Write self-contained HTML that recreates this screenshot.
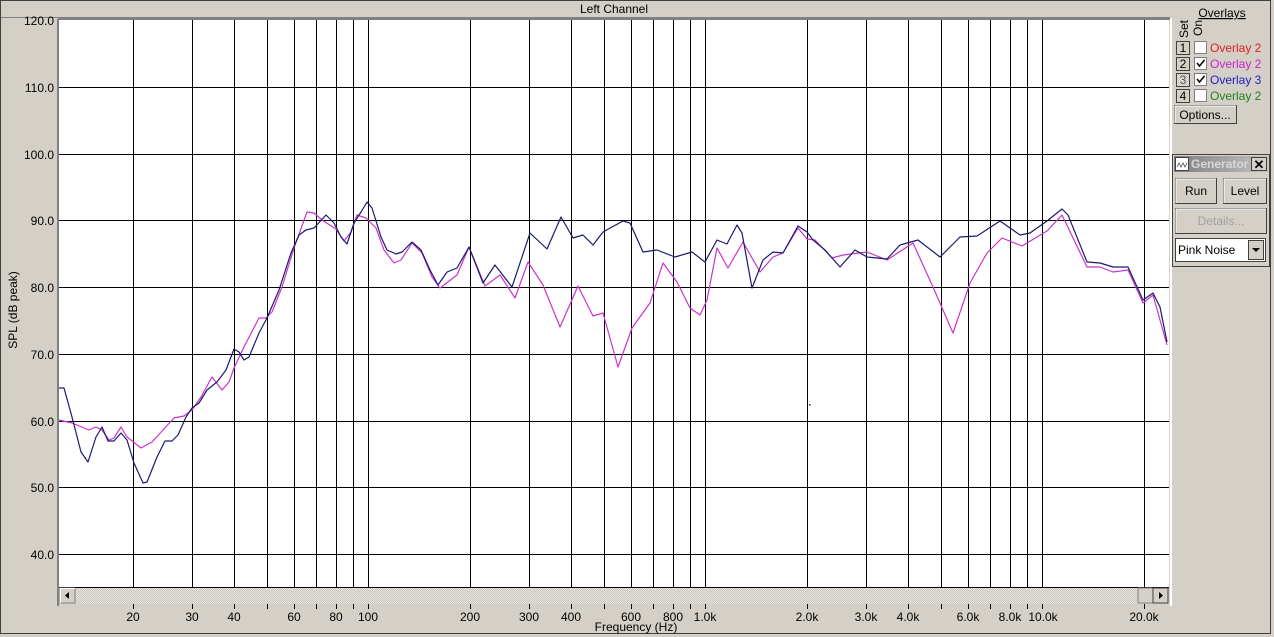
<!DOCTYPE html>
<html><head><meta charset="utf-8"><style>
html,body{margin:0;padding:0;background:#d4d0c8;}
svg{display:block;font-family:"Liberation Sans",Arial,sans-serif;}
</style></head><body>
<svg width="1274" height="637" viewBox="0 0 1274 637" xmlns="http://www.w3.org/2000/svg">
<defs>
<pattern id="hatch" width="2" height="2" patternUnits="userSpaceOnUse"><rect width="2" height="2" fill="#e8e6e2"/><rect width="1" height="1" fill="#c8c4bc"/><rect x="1" y="1" width="1" height="1" fill="#c8c4bc"/></pattern>
<linearGradient id="tg" x1="0" x2="1"><stop offset="0" stop-color="#808080"/><stop offset="1" stop-color="#c0c0c0"/></linearGradient>
</defs>
<rect width="1274" height="637" fill="#d4d0c8"/>
<rect x="0.5" y="0.5" width="1270" height="633" fill="none" stroke="#404040"/>
<line x1="1" y1="17.5" x2="1170" y2="17.5" stroke="#808080"/>
<text x="614" y="13" font-size="12" text-anchor="middle">Left Channel</text>
<rect x="59" y="20" width="1110" height="568" fill="#fff"/>
<line x1="58" y1="19" x2="58" y2="606" stroke="#808080" stroke-width="2"/>
<line x1="58" y1="19" x2="1170" y2="19" stroke="#808080" stroke-width="2"/>
<line x1="1171" y1="18" x2="1171" y2="606" stroke="#fff" stroke-width="2"/>
<path fill="none" stroke="#000" stroke-width="1" d="M59 87.5H1169M59 154.5H1169M59 220.5H1169M59 287.5H1169M59 354.5H1169M59 421.5H1169M59 487.5H1169M59 554.5H1169
M133.5 20V588M192.5 20V588M234.5 20V588M267.5 20V588M294.5 20V588M316.5 20V588M336.5 20V588M353.5 20V588M368.5 20V588
M470.5 20V588M529.5 20V588M571.5 20V588M604.5 20V588M631.5 20V588M653.5 20V588M673.5 20V588M690.5 20V588M705.5 20V588
M807.5 20V588M866.5 20V588M908.5 20V588M941.5 20V588M968.5 20V588M990.5 20V588M1010.5 20V588M1027.5 20V588M1042.5 20V588M1144.5 20V588
M59 587.5H1169"/>
<path stroke="#000" d="M133.5 604V609M192.5 604V609M234.5 604V609M267.5 604V609M294.5 604V609M316.5 604V609M336.5 604V609M353.5 604V609M368.5 604V609M470.5 604V609M529.5 604V609M571.5 604V609M604.5 604V609M631.5 604V609M653.5 604V609M673.5 604V609M690.5 604V609M705.5 604V609M807.5 604V609M866.5 604V609M908.5 604V609M941.5 604V609M968.5 604V609M990.5 604V609M1010.5 604V609M1027.5 604V609M1042.5 604V609M1144.5 604V609"/>
<rect x="59" y="588" width="1110" height="16" fill="url(#hatch)"/>
<rect x="60" y="588" width="15" height="15" fill="#d4d0c8" stroke="#808080"/>
<line x1="60" y1="588.5" x2="75" y2="588.5" stroke="#fff"/><line x1="60.5" y1="588" x2="60.5" y2="603" stroke="#fff"/>
<path d="M65 595.5L69 592V599Z" fill="#000"/>
<rect x="1138" y="588" width="15" height="15" fill="#d4d0c8" stroke="#808080"/>
<rect x="1153" y="588" width="15" height="15" fill="#d4d0c8" stroke="#404040"/>
<path d="M1159 592V599L1163 595.5Z" fill="#000"/>
<polyline fill="none" stroke="#cc33cc" stroke-width="1.2" stroke-linejoin="round" points="59,420 72,423 89,430 96,427 102,430 109,440 114,438 121,427 127,437 141,448 152,442 174,418 184,416 192,410 201,397 212,377 222,390 229,382 234,368 244,347 259,318 266,318 272,312 282,287 294,248 307,212 314,213 322,220 336,229 344,241 351,232 357,215 366,218 376,228 384,250 394,263 401,260 412,243 422,253 432,277 440,288 457,275 469,247 485,286 500,275 515,298 528,262 543,285 560,327 578,286 593,316 603,313 618,367 632,328 650,303 663,263 677,282 690,308 700,315 707,300 717,248 728,268 743,242 760,272 773,257 783,253 798,228 807,239 815,240 832,258 843,255 867,252 887,260 913,243 933,287 953,333 970,283 987,253 1002,238 1022,246 1047,231 1062,215 1087,267 1100,267 1113,272 1128,270 1143,303 1153,295 1167,345"/>
<polyline fill="none" stroke="#1a1a70" stroke-width="1.2" stroke-linejoin="round" points="59,388 64,388 72,417 81,452 88,462 96,437 102,427 108,441 114,441 121,433 127,440 134,463 143,483 147,482 157,457 165,441 172,441 178,435 186,417 192,408 199,403 207,390 217,382 226,370 234,349 239,352 244,360 249,357 259,333 267,318 279,290 291,253 299,235 306,230 314,228 326,215 334,223 341,237 347,244 354,223 361,212 367,202 372,208 381,237 387,250 396,254 402,252 412,242 421,250 430,270 438,285 447,272 457,268 469,247 483,283 495,265 512,287 530,233 547,249 561,217 573,238 583,235 593,245 603,232 623,221 630,223 643,252 657,250 675,257 692,252 705,262 717,240 727,244 737,225 742,233 752,288 763,260 773,252 783,253 798,226 807,232 813,240 825,250 840,267 855,250 867,257 887,259 900,245 918,240 940,257 960,237 977,236 1000,221 1020,235 1030,233 1047,221 1062,209 1068,215 1087,262 1100,263 1113,267 1128,267 1143,300 1153,293 1160,307 1167,342"/>
<rect x="809" y="404" width="1.5" height="1.5" fill="#1a1a70"/>
<g font-size="12" text-anchor="end">
<text x="54" y="25">120.0</text><text x="54" y="92">110.0</text><text x="54" y="159">100.0</text><text x="54" y="225">90.0</text><text x="54" y="292">80.0</text><text x="54" y="359">70.0</text><text x="54" y="426">60.0</text><text x="54" y="492">50.0</text><text x="54" y="559">40.0</text>
</g>
<text transform="translate(17,310) rotate(-90)" font-size="12" text-anchor="middle">SPL (dB peak)</text>
<g font-size="12" text-anchor="middle">
<text x="133" y="621">20</text><text x="192" y="621">30</text><text x="234" y="621">40</text><text x="294" y="621">60</text><text x="336" y="621">80</text><text x="368" y="621">100</text>
<text x="470" y="621">200</text><text x="529" y="621">300</text><text x="571" y="621">400</text><text x="631" y="621">600</text><text x="673" y="621">800</text><text x="705" y="621">1.0k</text>
<text x="807" y="621">2.0k</text><text x="866" y="621">3.0k</text><text x="908" y="621">4.0k</text><text x="968" y="621">6.0k</text><text x="1010" y="621">8.0k</text><text x="1043" y="621">10.0k</text><text x="1144" y="621">20.0k</text>
</g>
<text x="636" y="631" font-size="12" text-anchor="middle">Frequency (Hz)</text>
<text x="1222" y="17" font-size="12" text-anchor="middle" text-decoration="underline">Overlays</text>
<text transform="translate(1188,20) rotate(-90)" font-size="12" text-anchor="end">Set</text>
<text transform="translate(1202,20) rotate(-90)" font-size="12" text-anchor="end">On</text>
<g font-size="12">
<rect x="1176.5" y="41.5" width="13" height="13" fill="#d4d0c8" stroke="#404040"/><text x="1183" y="52" text-anchor="middle">1</text>
<rect x="1194.5" y="41.5" width="12" height="12" fill="#fff" stroke="#808080"/><text x="1210" y="52" fill="#e02020">Overlay 2</text>
<rect x="1176.5" y="57.5" width="13" height="13" fill="#d4d0c8" stroke="#404040"/><text x="1183" y="68" text-anchor="middle">2</text>
<rect x="1194.5" y="57.5" width="12" height="12" fill="#fff" stroke="#808080"/><path d="M1197 63l2.5 3 5-6" fill="none" stroke="#000" stroke-width="1.6"/><text x="1210" y="68" fill="#d020d0">Overlay 2</text>
<rect x="1176.5" y="73.5" width="13" height="13" fill="url(#hatch)" stroke="#404040"/><text x="1183" y="84" text-anchor="middle" fill="#555">3</text>
<rect x="1194.5" y="73.5" width="12" height="12" fill="#fff" stroke="#808080"/><path d="M1197 79l2.5 3 5-6" fill="none" stroke="#000" stroke-width="1.6"/><text x="1210" y="84" fill="#2020c0">Overlay 3</text>
<rect x="1176.5" y="89.5" width="13" height="13" fill="#d4d0c8" stroke="#404040"/><text x="1183" y="100" text-anchor="middle">4</text>
<rect x="1194.5" y="89.5" width="12" height="12" fill="#fff" stroke="#808080"/><text x="1210" y="100" fill="#208020">Overlay 2</text>
<rect x="1174.5" y="105.5" width="62" height="18" fill="#d4d0c8" stroke="#404040"/><path d="M1175 123V106H1236" fill="none" stroke="#fff"/><text x="1205" y="119" text-anchor="middle">Options...</text>
</g>
<rect x="1172.5" y="154.5" width="97" height="112" fill="#d4d0c8" stroke="#404040"/>
<rect x="1174" y="156" width="94" height="16" fill="url(#tg)"/>
<rect x="1175.5" y="157.5" width="13" height="13" fill="#fff" stroke="#404040"/>
<path d="M1177 167l2-4 2 4 2-4 2 4 2-4" fill="none" stroke="#444" stroke-width="0.8"/>
<text x="1191" y="168" font-size="12" font-weight="bold" fill="#d8d8d8">Generator</text>
<rect x="1251.5" y="157.5" width="15" height="13" fill="#d4d0c8" stroke="#404040"/>
<text x="1259" y="169" font-size="13" font-weight="bold" text-anchor="middle">✕</text>
<g font-size="12">
<rect x="1175.5" y="178.5" width="41" height="25" fill="#d4d0c8" stroke="#404040"/><path d="M1176 203V179H1216" fill="none" stroke="#fff"/><text x="1196" y="195" text-anchor="middle">Run</text>
<rect x="1223.5" y="178.5" width="43" height="25" fill="#d4d0c8" stroke="#404040"/><path d="M1224 203V179H1266" fill="none" stroke="#fff"/><text x="1245" y="195" text-anchor="middle">Level</text>
<rect x="1175.5" y="208.5" width="91" height="25" fill="#d4d0c8" stroke="#404040"/><path d="M1176 233V209H1266" fill="none" stroke="#fff"/><text x="1221" y="225" text-anchor="middle" fill="#a0a0a0">Details...</text>
<rect x="1175.5" y="238.5" width="90" height="23" fill="#fff" stroke="#404040"/>
<text x="1178" y="254">Pink Noise</text>
<rect x="1248.5" y="240.5" width="15" height="19" fill="#d4d0c8" stroke="#404040"/><path d="M1252 248h8l-4 4z" fill="#000"/>
</g>
</svg>
</body></html>
